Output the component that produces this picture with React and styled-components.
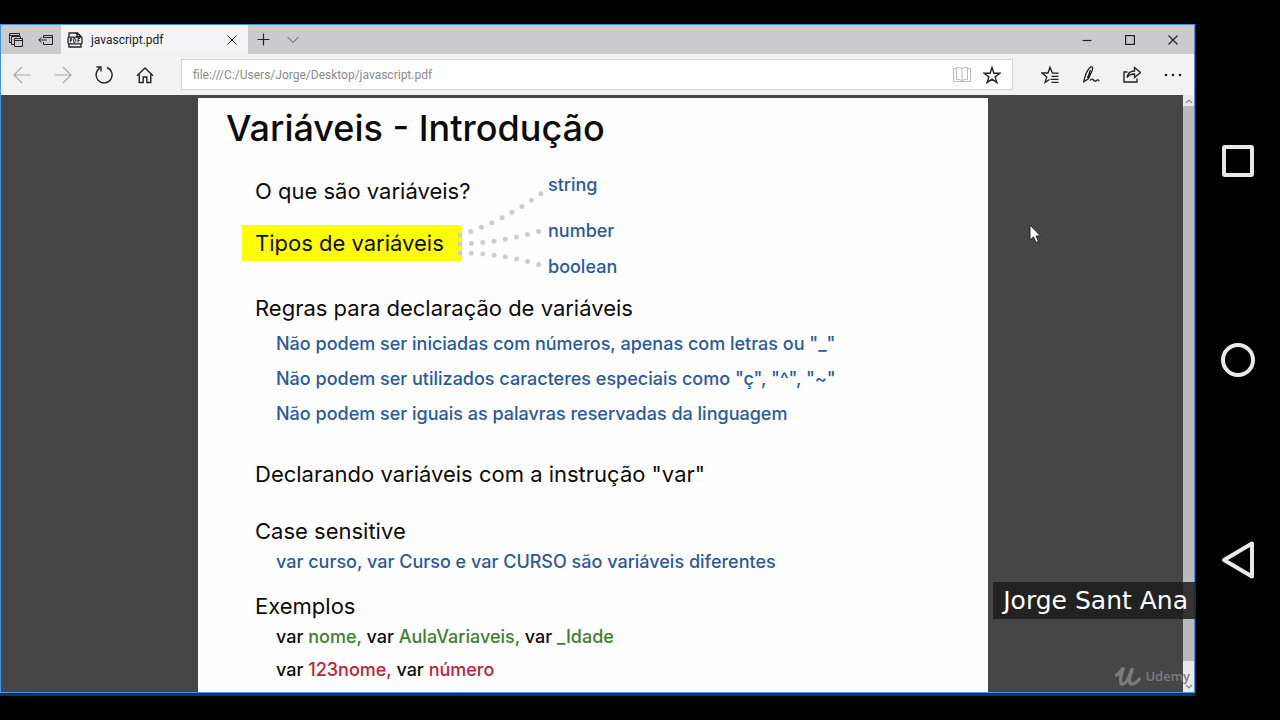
import React from "react";
import styled, { createGlobalStyle } from "styled-components";

const Global = createGlobalStyle`
  * { box-sizing: border-box; }
  body { margin: 0; background: #000; }
  button { font: inherit; color: inherit; background: none; border: 0; padding: 0; margin: 0; }
  h1, h2, p, ul { margin: 0; padding: 0; font-weight: inherit; }
  ul { list-style: none; }
`;

const Screen = styled.div`
  display: grid;
  grid-template-columns: minmax(0, 1fr) 85px;
  min-height: 100vh;
  background: #000;
`;

const Desktop = styled.div`
  display: flex;
  padding: 24px 0;
`;

const Window = styled.main`
  position: relative;
  flex: 1;
  min-width: 0;
  display: flex;
  flex-direction: column;
  border: 1px solid #4a90dc;
  box-shadow: 0 3px 0 #06396b, 1px 0 0 #0a2c55;
  margin-bottom: 3px;
  font-family: Roboto, "Open Sans", sans-serif;
  font-size: 12px;
`;

const TabBar = styled.header`
  display: flex;
  height: 29px;
  background: #cbcacd;
  color: #333;
`;

const IconButton = styled.button`
  display: flex;
  flex: none;
  align-items: center;
  justify-content: center;
  width: ${(p) => p.$w}px;
  color: ${(p) => p.$color || "#222"};
`;

const Tab = styled.div`
  display: flex;
  align-items: center;
  width: 187px;
  padding-left: 6px;
  background: #f3f2f4;
  color: #222;
`;

const TabTitle = styled.span`
  flex: 1;
  padding-left: 8px;
`;

const Spacer = styled.div`
  flex: 1;
`;

const Toolbar = styled.nav`
  display: flex;
  height: 41px;
  background: #f2f2f3;
`;

const Address = styled.label`
  display: flex;
  flex: 1;
  min-width: 0;
  margin: 5px 16px 5px 15px;
  padding-right: 5px;
  background: #fff;
  border: 1px solid #d2d2d2;
`;

const AddressInput = styled.input`
  flex: 1;
  min-width: 0;
  border: 0;
  padding: 0 11px;
  background: transparent;
  color: #8a8a8a;
  font: 12px Roboto, "Open Sans", sans-serif;
  outline: none;
`;

const Viewer = styled.section`
  flex: 1;
  display: grid;
  grid-template-columns: minmax(0, 1fr) 11px;
  background: #464646;
`;

const Canvas = styled.div`
  display: flex;
  justify-content: center;
  padding: 3px 0 0 2px;
`;

const ScrollBar = styled.div`
  display: flex;
  flex-direction: column;
  background: #e9e9e9;
  color: #888;
`;

const ScrollThumb = styled.div`
  flex: 1;
  background: #bababa;
`;

const ScrollEnd = styled.div`
  display: flex;
  justify-content: center;
  align-items: ${(p) => (p.$end ? "flex-end" : "center")};
  height: ${(p) => (p.$end ? 31 : 11)}px;
`;

const Sheet = styled.article`
  width: 790px;
  padding: 7px 28px 0;
  background: #fefefe;
  color: #0c0c0c;
  font-family: Inter, "Open Sans", sans-serif;
`;

const Title = styled.h1`
  font-size: 36px;
  font-weight: 500;
  line-height: 46px;
`;

const Intro = styled.div`
  display: grid;
  grid-template-columns: 220px 86px auto;
  justify-content: start;
  margin: 22px 0 15px 16px;
`;

const Questions = styled.div`
  display: flex;
  flex-direction: column;
  gap: 16px;
`;

const Question = styled.h2`
  padding-left: 13px;
  font-size: 22px;
  line-height: 36px;
  white-space: nowrap;
  background: ${(p) => (p.$marked ? "#ffff00" : "none")};
`;

const Dots = styled.svg`
  overflow: visible;
`;

const Types = styled.ul`
  color: #2a5a98;
  font-size: 18px;
  font-weight: 500;
  line-height: 24px;
`;

const Type = styled.li`
  margin-bottom: ${(p) => p.$gap || 0}px;
`;

const Topic = styled.section`
  padding-left: 29px;
  margin-bottom: ${(p) => p.$gap}px;
`;

const TopicTitle = styled.h2`
  font-size: 22px;
  line-height: 28px;
`;

const Lines = styled.ul`
  padding: ${(p) => (p.$airy ? 4 : 0)}px 0 0 21px;
  color: ${(p) => p.$color};
  font-size: 18px;
  font-weight: 500;
  line-height: ${(p) => (p.$airy ? 35 : 33)}px;
  white-space: nowrap;
`;

const Code = styled.span`
  color: ${(p) => (p.$valid ? "#3c8030" : "#bd2338")};
`;

const NameTag = styled.div`
  position: absolute;
  right: -1px;
  bottom: 73px;
  padding: 0 7px 0 10px;
  background: rgba(28, 28, 28, 0.85);
  color: #fff;
  font: 25px/37px "DejaVu Sans", sans-serif;
`;

const Watermark = styled.div`
  position: absolute;
  right: 4px;
  bottom: 4px;
  display: flex;
  align-items: center;
  gap: 4px;
  color: #7c7c7c;
  font: 600 13px/24px "Open Sans", sans-serif;
`;

const Cursor = styled.svg`
  position: absolute;
  left: 1028px;
  top: 199px;
`;

const PhoneNav = styled.nav`
  display: flex;
  flex-direction: column;
  align-items: center;
  justify-content: space-around;
  padding: 61px 0 59px;
`;

function Icon({ w = 18, h = 18, sw = 1, children }) {
  return (
    <svg width={w} height={h} viewBox={`0 0 ${w} ${h}`} fill="none" stroke="currentColor" strokeWidth={sw} aria-hidden="true">
      {children}
    </svg>
  );
}

export default function App() {
  return (
    <>
      <Global />
      <Screen>
        <Desktop>
          <Window>
            <TabBar>
              <IconButton $w={30} aria-label="Tabs set aside">
                <Icon w={14} h={14}>
                  <path d="M3 9.500H.5v-9h10v2M.5 2.500h10M5 11.500H2.500v-8h9v2" />
                  <path d="M5.500 5.500h8v8h-8zM5.500 7.500h8" />
                </Icon>
              </IconButton>
              <IconButton $w={30} aria-label="Set tabs aside">
                <Icon w={16} h={12}>
                  <path d="M5.500 4V1.500h9v9h-9V8M5.500 3.500h9M.8 6h8M3.500 3.300L.8 6l2.700 2.700" />
                </Icon>
              </IconButton>
              <Tab>
                <Icon w={16} h={16} sw={1.3}>
                  <path d="M2 5V1h8.500L14 4.300V5M10 1v3.500h4M2 12v3h12v-3" />
                  <rect x="1" y="5.200" width="14" height="6.600" rx="1" />
                  <path d="M3.300 10.500v-4h1.400v2H3.300M6.800 6.500v4h1.100l.9-.9V7.400l-.9-.9zM11 10.500v-4h2M11 8.400h1.600" strokeWidth="1" />
                </Icon>
                <TabTitle>javascript.pdf</TabTitle>
                <IconButton $w={32} aria-label="Close tab">
                  <Icon w={10} h={10}><path d="M.5.5l9 9M9.500.5l-9 9" /></Icon>
                </IconButton>
              </Tab>
              <IconButton $w={30} aria-label="New tab">
                <Icon w={13} h={13} sw={1.2}><path d="M6.500.5v12M.5 6.500h12" /></Icon>
              </IconButton>
              <IconButton $w={30} aria-label="Tab previews" $color="#555">
                <Icon w={12} h={8}><path d="M.5 1L6 6.500 11.500 1" /></Icon>
              </IconButton>
              <Spacer />
              <IconButton $w={43} aria-label="Minimize">
                <Icon w={10} h={10} sw={1.2}><path d="M.5 5.500h9" /></Icon>
              </IconButton>
              <IconButton $w={43} aria-label="Maximize">
                <Icon w={10} h={10} sw={1.2}><rect x=".6" y=".6" width="8.800" height="8.800" /></Icon>
              </IconButton>
              <IconButton $w={43} aria-label="Close">
                <Icon w={10} h={10} sw={1.2}><path d="M.5.5l9 9M9.500.5l-9 9" /></Icon>
              </IconButton>
            </TabBar>
            <Toolbar>
              <IconButton $w={42} $color="#aaa" aria-label="Back">
                <Icon sw={1.2}><path d="M17.500 9H1M9 1L1 9l8 8" /></Icon>
              </IconButton>
              <IconButton $w={40} $color="#aaa" aria-label="Forward">
                <Icon sw={1.2}><path d="M.5 9H17M9 1l8 8-8 8" /></Icon>
              </IconButton>
              <IconButton $w={41} aria-label="Refresh">
                <Icon sw={1.4}><path d="M12 1.500A8 8 0 1 1 4.800 2.200M1.500 1h4.500v4.600" /></Icon>
              </IconButton>
              <IconButton $w={42} aria-label="Home">
                <Icon sw={1.4}><path d="M1 9.700L9 2l8 7.700M3.200 8v8.500h4V11h3.600v5.500h4V8" /></Icon>
              </IconButton>
              <Address>
                <AddressInput aria-label="Address" defaultValue="file:///C:/Users/Jorge/Desktop/javascript.pdf" />
                <IconButton $w={30} $color="#bbb" aria-label="Reading view">
                  <Icon w={18} h={17}><path d="M9 3v11.500M9 2.500Q6.500.8 3.500 1.500v12Q6.500 13 9 14.500 11.500 13 14.500 13.500v-12Q11.500.8 9 2.500M3.500 2.500h-3v13h17v-13h-3" /></Icon>
                </IconButton>
                <IconButton $w={30} aria-label="Add to favorites">
                  <Icon sw={1.4}><path d="M9 1.500l1.900 5.700 6 .1-4.800 3.600 1.800 5.700L9 13.100l-4.900 3.500 1.800-5.700L1.100 7.300l6-.1z" /></Icon>
                </IconButton>
              </Address>
              <IconButton $w={41} aria-label="Favorites hub">
                <Icon sw={1.3}><path d="M17.500 7.200h-6L9 1.200 7 7H1l4.800 3.900L4 16.500l4.500-3M10.500 10.300h7M9.500 13.300h8M10.500 16.300h7" /></Icon>
              </IconButton>
              <IconButton $w={41} aria-label="Add notes">
                <Icon sw={1.3}><path d="M1.500 16.500L3.500 9Q6 2.500 9 .9q2.500-.4 1.200 3.300L6.500 12.500l-4 3M5.500 12L8.500 4M8 14.500q2-2.500 3.500-.5t3 .5 2.700.7" /></Icon>
              </IconButton>
              <IconButton $w={41} aria-label="Share">
                <Icon sw={1.4}><path d="M4.500 6H1v10h13v-3.500M4 11.500Q5.200 5 11.500 5V1.500l6 5-6 5V8Q7 7.700 4 11.500z" /></Icon>
              </IconButton>
              <IconButton $w={42} aria-label="More">
                <Icon>
                  <g fill="currentColor" stroke="none"><circle cx="2" cy="9" r="1.3" /><circle cx="9" cy="9" r="1.3" /><circle cx="16" cy="9" r="1.3" /></g>
                </Icon>
              </IconButton>
            </Toolbar>
            <Viewer>
              <Canvas>
                <Sheet>
                  <Title>Variáveis - Introdução</Title>
                  <Intro>
                    <Questions>
                      <Question>O que são variáveis?</Question>
                      <Question $marked>Tipos de variáveis</Question>
                    </Questions>
                    <Dots width="86" height="106" viewBox="0 0 86 106" fill="none" stroke="#cdcdd0" strokeWidth="5" strokeLinecap="round" aria-hidden="true">
                      <path d="M-2 62Q38 50 80 20" strokeDasharray="0 11.4" />
                      <path d="M-2 71Q38 70 78 58" strokeDasharray="0 11.4" />
                      <path d="M-2 80Q38 80 78 92" strokeDasharray="0 11.4" />
                    </Dots>
                    <Types>
                      <Type $gap={22}>string</Type>
                      <Type $gap={12}>number</Type>
                      <Type>boolean</Type>
                    </Types>
                  </Intro>
                  <Topic $gap={29}>
                    <TopicTitle>Regras para declaração de variáveis</TopicTitle>
                    <Lines $color="#2a5a98" $airy>
                      <li>Não podem ser iniciadas com números, apenas com letras ou "_"</li>
                      <li>Não podem ser utilizados caracteres especiais como "ç", "^", "~"</li>
                      <li>Não podem ser iguais as palavras reservadas da linguagem</li>
                    </Lines>
                  </Topic>
                  <Topic $gap={29}>
                    <TopicTitle>Declarando variáveis com a instrução "var"</TopicTitle>
                  </Topic>
                  <Topic $gap={14}>
                    <TopicTitle>Case sensitive</TopicTitle>
                    <Lines $color="#2a5a98">
                      <li>var curso, var Curso e var CURSO são variáveis diferentes</li>
                    </Lines>
                  </Topic>
                  <Topic $gap={0}>
                    <TopicTitle>Exemplos</TopicTitle>
                    <Lines $color="#0c0c0c">
                      <li>var <Code $valid>nome,</Code> var <Code $valid>AulaVariaveis,</Code> var <Code $valid>_Idade</Code></li>
                      <li>var <Code>123nome,</Code> var <Code>número</Code></li>
                    </Lines>
                  </Topic>
                </Sheet>
              </Canvas>
              <ScrollBar>
                <ScrollEnd><Icon w={8} h={6} sw={1.2}><path d="M1 5l3-3 3 3" /></Icon></ScrollEnd>
                <ScrollThumb />
                <ScrollEnd $end><Icon w={8} h={8} sw={1.2}><path d="M1 1l3 3 3-3" /></Icon></ScrollEnd>
              </ScrollBar>
            </Viewer>
            <Cursor width="12" height="20" viewBox="0 0 12 20" aria-hidden="true">
              <path d="M1 1v15l3.500-3 2.500 5.500 2.500-1-2.500-5.500h4.500z" fill="#fff" stroke="#222" />
            </Cursor>
            <NameTag>Jorge Sant Ana</NameTag>
            <Watermark>
              <svg width="26" height="22" viewBox="0 0 26 22" fill="none" stroke="currentColor" strokeLinecap="round" aria-hidden="true">
                <path d="M1.500 10Q6 8 8.500 2.500 3.500 17 7 19q4 1.500 9.500-13" strokeWidth="3.500" />
                <path d="M17 4.500Q12 18 16.500 19q3.500.5 8-5" strokeWidth="3.500" />
              </svg>
              Udemy
            </Watermark>
          </Window>
        </Desktop>
        <PhoneNav aria-label="Device navigation">
          <IconButton $w={40} $color="#e9e9e9" aria-label="Recent apps">
            <Icon w={36} h={36} sw={4}><rect x="4" y="4" width="28" height="28" rx="1" /></Icon>
          </IconButton>
          <IconButton $w={40} $color="#e9e9e9" aria-label="Home screen">
            <Icon w={36} h={36} sw={4}><circle cx="18" cy="18" r="15" /></Icon>
          </IconButton>
          <IconButton $w={40} $color="#e9e9e9" aria-label="Go back">
            <Icon w={36} h={38} sw={4}><path d="M4 19L32 2.500v33z" strokeLinejoin="round" /></Icon>
          </IconButton>
        </PhoneNav>
      </Screen>
    </>
  );
}
